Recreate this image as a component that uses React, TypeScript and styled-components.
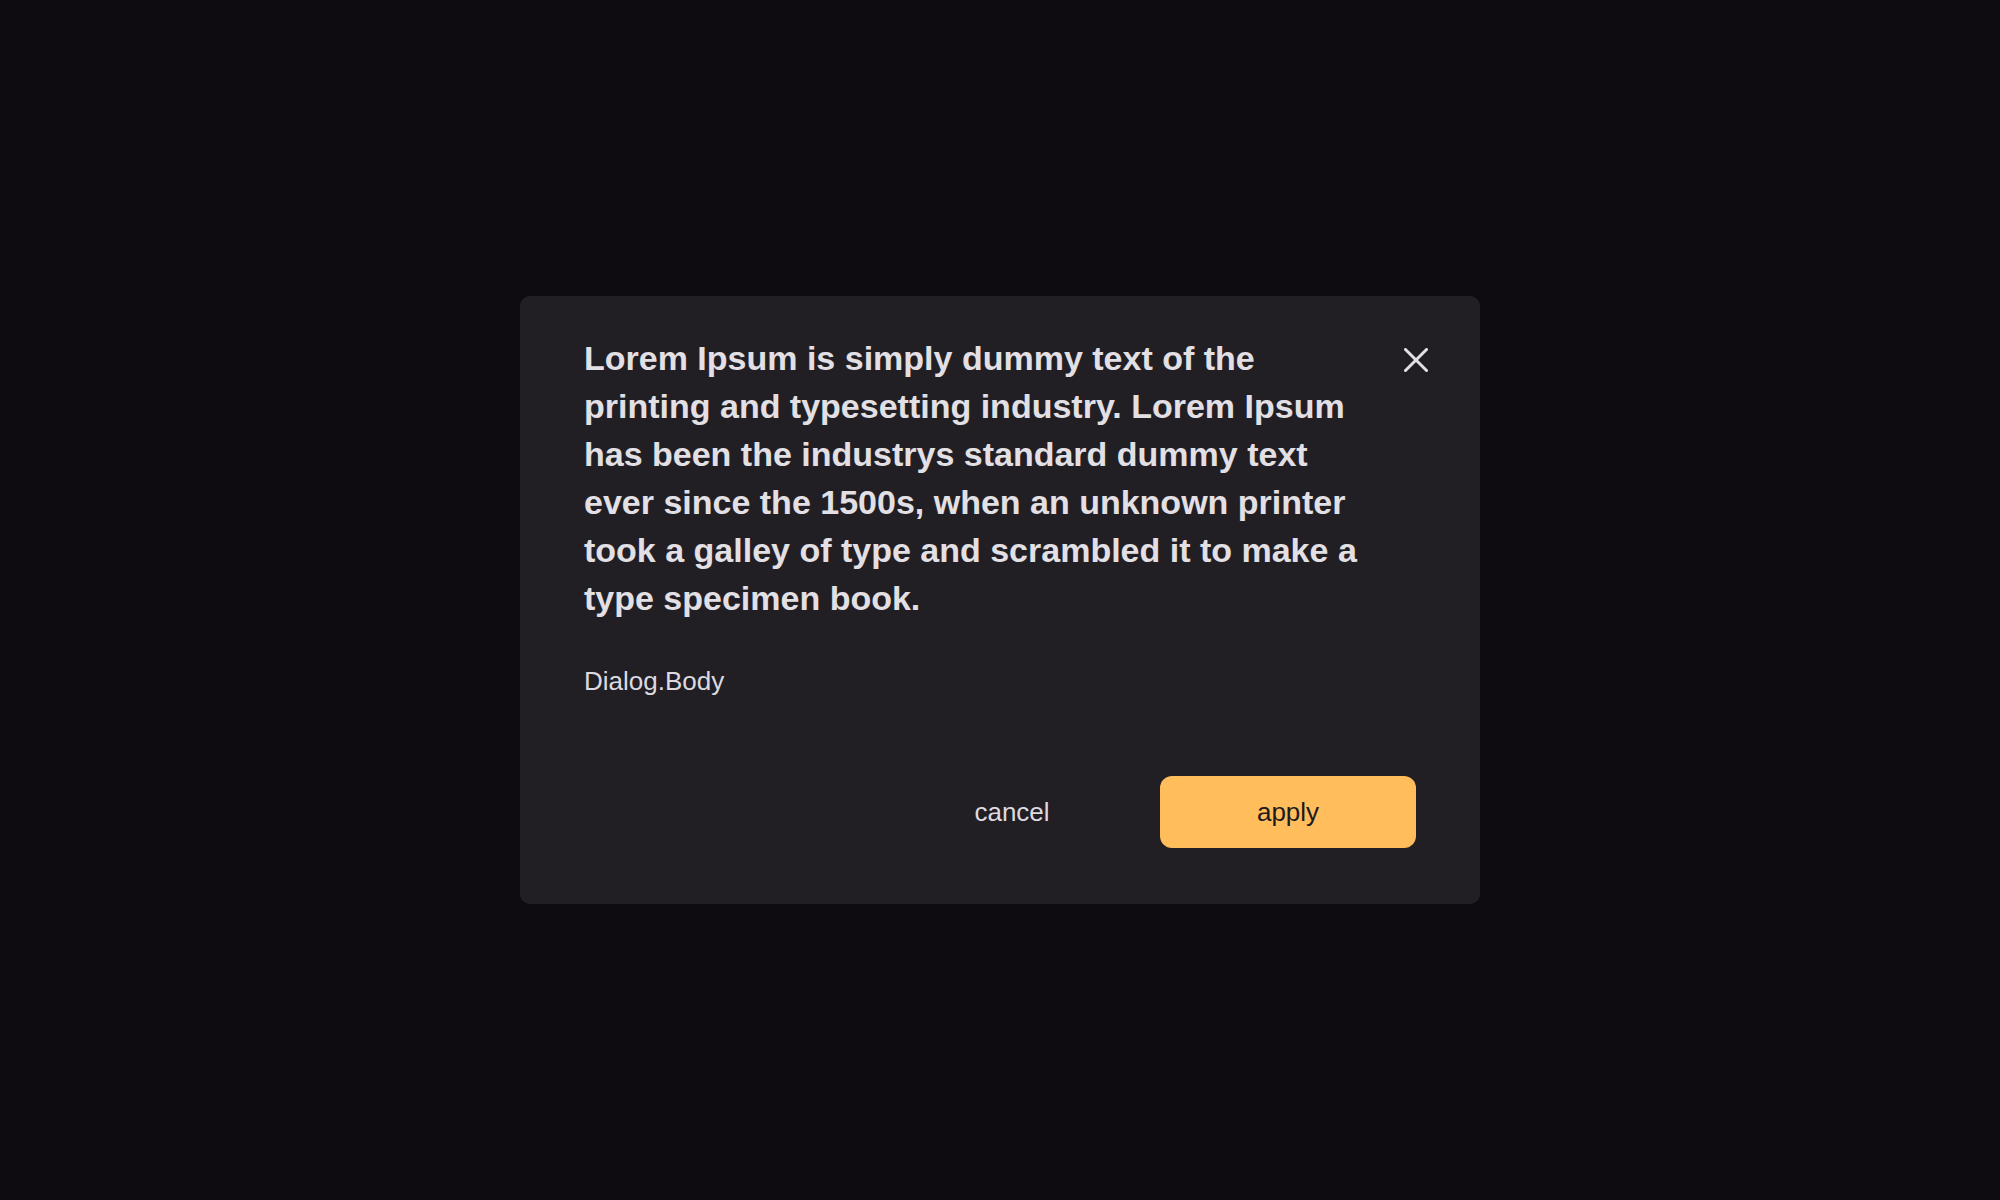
import React from 'react';
import styled, {createGlobalStyle} from 'styled-components';

const GlobalStyle = createGlobalStyle`
  html, body {
    margin: 0;
    padding: 0;
    background: #0e0c10;
  }
  body {
    font-family: "Liberation Sans", Arial, sans-serif;
  }
`;

export const Page = styled.div`
  width: 100%;
  height: 1200px;
  display: flex;
  align-items: center;
  justify-content: center;
  background: #0e0c10;
`;

export const DialogBox = styled.div`
  box-sizing: border-box;
  width: 960px;
  height: 608px;
  padding: 38px 64px 56px 64px;
  border-radius: 10px;
  background: #221f24;
  display: flex;
  flex-direction: column;
`;

export const DialogHeader = styled.div`
  display: flex;
  align-items: flex-start;
  gap: 32px;
`;

export const DialogTitle = styled.h2`
  flex: 1;
  margin: 0;
  font-size: 34px;
  line-height: 48px;
  font-weight: 700;
  color: #e2e0e4;
`;

export const CloseButton = styled.button`
  flex: none;
  width: 24px;
  height: 24px;
  margin: 14px -12px 0 0;
  padding: 0;
  border: none;
  background: transparent;
  color: #e2e0e4;
  cursor: pointer;
  display: flex;
  align-items: center;
  justify-content: center;
`;

export const DialogBody = styled.p`
  margin: 41px 0 0 0;
  font-size: 26px;
  line-height: 36px;
  color: #dcdae0;
`;

export const DialogFooter = styled.div`
  margin-top: auto;
  display: flex;
  justify-content: flex-end;
  gap: 20px;
`;

export const FooterButton = styled.button<{$primary?: boolean}>`
  width: 256px;
  height: 72px;
  border: none;
  border-radius: 12px;
  font-family: "Liberation Sans", Arial, sans-serif;
  font-size: 26px;
  cursor: pointer;
  color: ${p => (p.$primary ? '#1c1a1e' : '#dcdae0')};
  background: ${p => (p.$primary ? '#ffbd5c' : 'transparent')};
`;

const CloseIcon = () => (
    <svg width="24" height="24" viewBox="0 0 24 24" fill="none">
        <path d="M1.5 1.5L22.5 22.5M22.5 1.5L1.5 22.5" stroke="currentColor" strokeWidth="3" strokeLinecap="round"/>
    </svg>
);

const App = () => {
    return (
        <Page>
            <GlobalStyle/>
            <DialogBox>
                <DialogHeader>
                    <DialogTitle>
                        Lorem Ipsum is simply dummy text of the printing and typesetting industry. Lorem Ipsum
                        has been the industrys standard dummy text ever since the 1500s, when an unknown printer
                        took a galley of type and scrambled it to make a type specimen book.
                    </DialogTitle>
                    <CloseButton aria-label="close">
                        <CloseIcon/>
                    </CloseButton>
                </DialogHeader>
                <DialogBody>Dialog.Body</DialogBody>
                <DialogFooter>
                    <FooterButton>cancel</FooterButton>
                    <FooterButton $primary>apply</FooterButton>
                </DialogFooter>
            </DialogBox>
        </Page>
    );
};

export default App;
